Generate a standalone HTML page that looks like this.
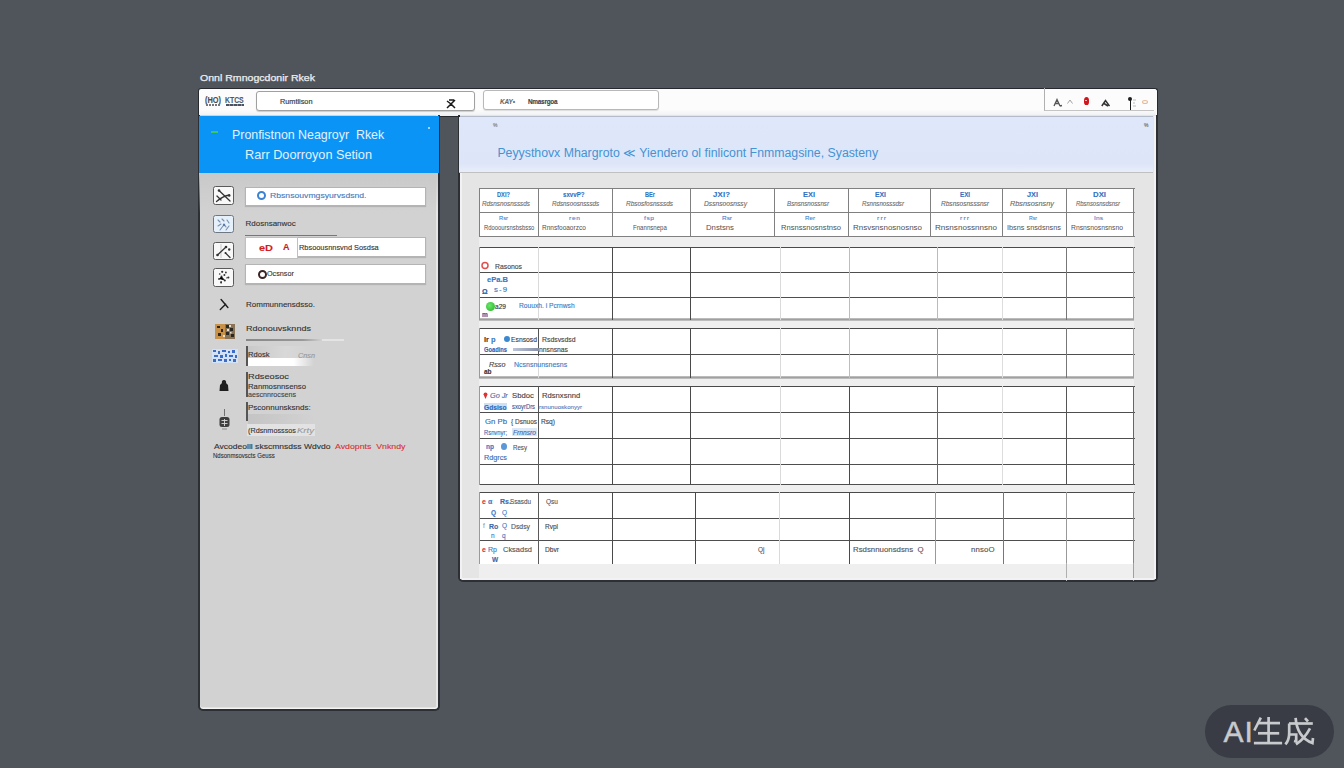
<!DOCTYPE html>
<html><head><meta charset="utf-8">
<style>
*{margin:0;padding:0;box-sizing:border-box}
html,body{width:1344px;height:768px;overflow:hidden;background:#50555c;font-family:"Liberation Sans",sans-serif;position:relative}
.a{position:absolute}
.t{position:absolute;white-space:nowrap;line-height:1}
</style></head><body>

<div class="t" style="left:200px;top:73.86px;font-size:9px;color:#eceef0;transform:scaleX(1.173);transform-origin:0 0;-webkit-text-stroke:0.25px #eceef0;">Onnl Rmnogcdonir Rkek</div>
<div class="a" style="left:198px;top:88px;width:960px;height:28px;background:#fcfcfc;border:1px solid #26292d;border-bottom:none;border-radius:3px 3px 0 0"></div>
<div class="a" style="left:199px;top:110px;width:957px;height:6px;background:linear-gradient(#fbfbfb,#eef0f2)"></div>
<div class="t" style="left:205px;top:95.69px;font-size:8.5px;color:#4a4e54;transform:scaleX(0.869);transform-origin:0 0;-webkit-text-stroke:0.12px #4a4e54;font-weight:bold;">(HO)</div>
<div class="a" style="left:205.5px;top:104.3px;width:15px;height:1.3px;background:repeating-linear-gradient(90deg,#777 0 2px,transparent 2px 3px)"></div>
<div class="t" style="left:225.3px;top:95.69px;font-size:8.5px;color:#4a5a6c;transform:scaleX(0.808);transform-origin:0 0;-webkit-text-stroke:0.12px #4a5a6c;font-weight:bold;">KTCS</div>
<div class="a" style="left:225.5px;top:104.2px;width:18.5px;height:1.6px;background:repeating-linear-gradient(90deg,#4a5260 0 3px,#8a9098 3px 4px)"></div>
<div class="a" style="left:256px;top:91px;width:219px;height:20px;background:#fff;border:1px solid #a0a0a0;border-radius:3px;box-shadow:0 1px 1px rgba(0,0,0,.18)"></div>
<div class="t" style="left:280px;top:97.82px;font-size:8px;color:#404040;transform:scaleX(0.913);transform-origin:0 0;-webkit-text-stroke:0.2px #404040;">Rumtlison</div>
<svg class="a" style="left:445px;top:97.5px" width="13" height="12"><path d="M2 3 L6 6 L2 10 M10 2 L6 6 L10 10 M4 2 h5" stroke="#1a1a1a" stroke-width="1.5" fill="none"/></svg>
<div class="a" style="left:483px;top:90px;width:176px;height:20px;background:#fff;border:1px solid #b8b8b8;border-radius:3px;box-shadow:0 1px 1px rgba(0,0,0,.12)"></div>
<div class="t" style="left:500px;top:98.32px;font-size:8px;color:#666;letter-spacing:-0.120px;transform:scaleX(0.800);transform-origin:0 0;-webkit-text-stroke:0.12px #666;font-style:italic;font-weight:bold;">KAY&bull;</div>
<div class="t" style="left:528px;top:98.32px;font-size:8px;color:#404040;letter-spacing:-0.321px;transform:scaleX(0.800);transform-origin:0 0;-webkit-text-stroke:0.12px #404040;font-weight:bold;">Nmasrgoa</div>
<div class="a" style="left:1044px;top:88px;width:110px;height:23px;border-left:1px solid #b0b0b0;border-bottom:1px solid #c4c4c4"></div>
<svg class="a" style="left:1053px;top:97.5px" width="10" height="9"><path d="M1 8 L4 1.5 L7 8 M2.5 5.5 h3 M7 8 l2 -0.5" stroke="#555" stroke-width="1.3" fill="none"/></svg>
<svg class="a" style="left:1066.5px;top:99px" width="6" height="5"><path d="M0.5 4.5 L3 1 L5.5 4.5" stroke="#999" stroke-width="0.9" fill="none"/></svg>
<div class="a" style="left:1083.5px;top:97px;width:5px;height:7.5px;background:#d4141c;border-radius:50% 50% 45% 45%"></div>
<div class="a" style="left:1085.3px;top:99.5px;width:1.5px;height:1.5px;background:#fff;opacity:.7"></div>
<svg class="a" style="left:1100.5px;top:98.5px" width="9" height="8"><path d="M0.8 7 L4.5 1.5 L8.5 7 M3 4.5 L7 7" stroke="#333" stroke-width="1.5" fill="none"/></svg>
<div class="a" style="left:1129.5px;top:98px;width:1.6px;height:12px;background:#1e1e1e"></div>
<div class="a" style="left:1128.3px;top:97px;width:4px;height:4px;background:#1e1e1e;border-radius:50%"></div>
<svg class="a" style="left:1132px;top:99px" width="5" height="10"><path d="M1 1 h3 M1 4 h2 M1 7 h3" stroke="#aaa" stroke-width="0.8"/></svg>
<div class="a" style="left:1141.5px;top:100px;width:6px;height:4px;border:1px solid #e8b898;border-radius:50%"></div>
<div class="a" style="left:198px;top:115px;width:242px;height:595.5px;background:#d2d2d2;border:2px solid #2c2f34;border-top:none;border-radius:0 0 5px 5px;box-shadow:inset 0 -1.5px 0 #f4f4f4,inset -2px 0 0 #e6e6e6"></div>
<div class="a" style="left:199px;top:116px;width:240px;height:56.5px;background:#0a94f6"></div>
<div class="a" style="left:199px;top:172.5px;width:239px;height:40px;background:linear-gradient(#c9c9c9,rgba(210,210,210,0))"></div>
<div class="a" style="left:211px;top:131px;width:7px;height:2px;background:#3cc85a"></div>
<div class="a" style="left:428px;top:127px;width:2px;height:2px;background:#cfe9ff;border-radius:50%"></div>
<div class="t" style="left:232px;top:128.90px;font-size:12.4px;color:#e4f1ff;">Pronfistnon Neagroyr &nbsp;Rkek</div>
<div class="t" style="left:245px;top:148.80px;font-size:12.4px;color:#e4f1ff;transform:scaleX(1.024);transform-origin:0 0;">Rarr Doorroyon Setion</div>
<div class="a" style="left:213px;top:186.3px;width:21px;height:19.2px;background:#f8f8f8;border:1.5px solid #5a5a5a;border-radius:2.5px"></div>
<svg class="a" style="left:213px;top:186px" width="21" height="20"><g stroke="#333" stroke-width="1.3" fill="none" stroke-linecap="round"><path d="M6 4.5 L17 15"/><path d="M3.5 15.5 Q10 10 16.5 9"/><path d="M4 10 L8 14"/></g><circle cx="6" cy="4.5" r="1.3" fill="#333"/><circle cx="16.2" cy="9.5" r="1.3" fill="#333"/></svg>
<div class="a" style="left:213px;top:215.2px;width:21px;height:18.3px;background:#e6f0fb;border:1.5px solid #6e7884;border-radius:2.5px"></div>
<svg class="a" style="left:213px;top:215px" width="21" height="19"><g stroke="#7890b0" stroke-width="1.1" fill="none" stroke-linecap="round"><path d="M5 5 L7 7 M9 4 L11 6 M14 5 L16 8 M5 11 L8 9 M11 9 L13 12 M7 15 L10 11 M13 15 L16 11"/></g><circle cx="11" cy="10" r="1.2" fill="#5a78a8"/></svg>
<div class="a" style="left:213px;top:241.5px;width:21px;height:18.2px;background:#f8f8f8;border:1.5px solid #5a5a5a;border-radius:2.5px"></div>
<svg class="a" style="left:213px;top:241px" width="21" height="19"><path d="M8 3 V17" stroke="#bbb" stroke-width="0.8"/><g stroke="#333" stroke-width="1.2" fill="none" stroke-linecap="round"><path d="M4.5 14 L13 6"/><path d="M12.5 12 L17 16.5"/></g><circle cx="4.5" cy="14" r="1.3" fill="#333"/><circle cx="13" cy="6" r="1.3" fill="#333"/><circle cx="16.2" cy="8.5" r="1.2" fill="#333"/><circle cx="12.5" cy="12" r="1" fill="#333"/></svg>
<div class="a" style="left:213px;top:267.8px;width:21px;height:18.9px;background:#f8f8f8;border:1.5px solid #5a5a5a;border-radius:2.5px"></div>
<svg class="a" style="left:213px;top:267px" width="21" height="20"><g fill="#333"><circle cx="9.2" cy="4.8" r="1.1"/><circle cx="12.9" cy="5.5" r="0.9"/><circle cx="6.7" cy="7" r="0.8"/><circle cx="11.4" cy="8" r="1"/><circle cx="8.5" cy="9.5" r="1"/><circle cx="6" cy="12" r="0.9"/><circle cx="15.4" cy="10.6" r="1"/><circle cx="11.8" cy="13.5" r="1"/><ellipse cx="8.1" cy="15.3" rx="0.9" ry="1.4"/></g><g stroke="#333" stroke-width="0.8"><path d="M6 12 L8.5 9.5 L11.8 13.5 M13 11 L15.4 10.6"/></g></svg>
<div class="a" style="left:245px;top:187px;width:181px;height:19px;background:#fff;border:1px solid #b4b4b4;box-shadow:0 1px 1px rgba(0,0,0,.14)"></div>
<div class="a" style="left:257px;top:191px;width:9px;height:9px;border:2px solid #3d82d0;border-radius:50%"></div>
<div class="t" style="left:269.5px;top:191.92px;font-size:8px;color:#4a78b8;transform:scaleX(1.080);transform-origin:0 0;-webkit-text-stroke:0.12px #4a78b8;">Rbsnsouvmgsyurvsdsnd.</div>
<div class="t" style="left:245.5px;top:220.32px;font-size:8px;color:#333;-webkit-text-stroke:0.12px #333;">Rdosnsanwoc</div>
<div class="a" style="left:245px;top:235px;width:92px;height:1px;background:#777"></div>
<div class="a" style="left:245px;top:237px;width:181px;height:20px;background:#fff;border:1px solid #b4b4b4;box-shadow:0 1px 1px rgba(0,0,0,.14)"></div>
<div class="a" style="left:245px;top:237px;width:53px;height:22px;background:#fff;border:1px solid #c0c0c0"></div>
<div class="t" style="left:258.5px;top:243.13px;font-size:9.5px;color:#d41e1e;transform:scaleX(1.152);transform-origin:0 0;-webkit-text-stroke:0.12px #d41e1e;font-weight:bold;">eD</div>
<div class="t" style="left:283px;top:243.36px;font-size:9px;color:#c82020;-webkit-text-stroke:0.12px #c82020;font-weight:bold;">A</div>
<div class="t" style="left:299px;top:243.52px;font-size:8px;color:#333;transform:scaleX(0.924);transform-origin:0 0;-webkit-text-stroke:0.12px #333;">Rbsoousnnsvnd Sosdsa</div>
<div class="a" style="left:245px;top:264px;width:181px;height:20px;background:#fff;border:1px solid #b4b4b4;box-shadow:0 1px 1px rgba(0,0,0,.14)"></div>
<div class="a" style="left:258.2px;top:269.5px;width:9px;height:9px;border:2.8px solid #3c2424;border-radius:50%"></div>
<div class="t" style="left:267.4px;top:270.42px;font-size:8px;color:#333;transform:scaleX(0.903);transform-origin:0 0;-webkit-text-stroke:0.12px #333;">Ocsnsor</div>
<svg class="a" style="left:218px;top:297px" width="14" height="14"><g stroke="#1e1e1e" stroke-width="1.4" fill="none" stroke-linecap="round"><path d="M3.1 2.5 L9.9 10.5"/><path d="M2.3 12.4 L7.6 7.3"/></g></svg>
<div class="t" style="left:246px;top:301.12px;font-size:8px;color:#333;-webkit-text-stroke:0.12px #333;">Rommunnensdsso.</div>
<svg class="a" style="left:214.5px;top:323.5px" width="20" height="15"><rect x="0" y="0" width="20" height="15" fill="#8a7458"/><rect x="0" y="0" width="10" height="15" fill="#c8924a"/><g fill="#2a2620"><rect x="2" y="2" width="3" height="2"/><rect x="6" y="5" width="2" height="3"/><rect x="3" y="9" width="3" height="3"/><rect x="11" y="1" width="3" height="3"/><rect x="15" y="4" width="3" height="3"/><rect x="11" y="8" width="3" height="3"/><rect x="16" y="10" width="3" height="3"/></g><g fill="#e8e0d0"><rect x="14" y="1" width="2" height="2"/><rect x="12" y="5" width="2" height="2"/><rect x="15" y="8" width="1.5" height="1.5"/><rect x="8" y="11" width="2" height="2"/></g></svg>
<div class="t" style="left:246px;top:325.32px;font-size:8px;color:#333;transform:scaleX(1.133);transform-origin:0 0;-webkit-text-stroke:0.12px #333;">Rdonouvsknnds</div>
<div class="a" style="left:246px;top:339px;width:76px;height:2px;background:linear-gradient(90deg,#888 0%,#999 75%,rgba(200,200,200,0) 100%)"></div>
<div class="a" style="left:322px;top:339px;width:22px;height:2px;background:#e4e4e4"></div>
<svg class="a" style="left:211.7px;top:348.7px" width="26" height="14"><rect width="26" height="14" fill="#d4e2f6"/><g fill="#3a6cc8"><rect x="1" y="1" width="3" height="2"/><rect x="6" y="2" width="2" height="3"/><rect x="10" y="1" width="4" height="2"/><rect x="16" y="2" width="2" height="2"/><rect x="20" y="1" width="3" height="3"/><rect x="2" y="6" width="4" height="2"/><rect x="8" y="6" width="3" height="3"/><rect x="13" y="5" width="2" height="3"/><rect x="17" y="6" width="4" height="2"/><rect x="23" y="6" width="2" height="3"/><rect x="1" y="10" width="3" height="3"/><rect x="6" y="10" width="4" height="2"/><rect x="12" y="10" width="3" height="3"/><rect x="17" y="10" width="2" height="2"/><rect x="21" y="10" width="3" height="3"/></g></svg>
<div class="a" style="left:246px;top:346px;width:66px;height:13px;background:linear-gradient(90deg,#c8c8c8,#d8d8d8 60%,rgba(210,210,210,0))"></div>
<div class="a" style="left:246px;top:358px;width:68px;height:8px;background:linear-gradient(90deg,#fff 70%,rgba(255,255,255,0))"></div>
<div class="a" style="left:246px;top:346px;width:1.5px;height:20px;background:#555"></div>
<div class="t" style="left:247.5px;top:350.62px;font-size:8px;color:#333;transform:scaleX(0.948);transform-origin:0 0;-webkit-text-stroke:0.12px #333;">Rdosk</div>
<div class="t" style="left:298px;top:351.78px;font-size:7px;color:#999;transform:scaleX(1.040);transform-origin:0 0;-webkit-text-stroke:0.12px #999;font-style:italic;">Cnsn</div>
<svg class="a" style="left:218px;top:379px" width="12" height="13"><path d="M6 1 C4 1 3.5 3 4 4 L2 6 L1.5 12 L10.5 12 L10 6 L8 4 C8.5 3 8 1 6 1Z" fill="#1e1e1e"/></svg>
<div class="a" style="left:246px;top:372px;width:1.5px;height:25px;background:#555"></div>
<div class="t" style="left:248px;top:372.72px;font-size:8px;color:#333;transform:scaleX(1.152);transform-origin:0 0;-webkit-text-stroke:0.12px #333;">Rdseosoc</div>
<div class="t" style="left:248px;top:382.62px;font-size:8px;color:#333;transform:scaleX(0.966);transform-origin:0 0;-webkit-text-stroke:0.12px #333;">Ranmosnnsenso</div>
<div class="t" style="left:248px;top:391.15px;font-size:7.5px;color:#444;transform:scaleX(0.951);transform-origin:0 0;-webkit-text-stroke:0.12px #444;">aescnnrocsens</div>
<div class="a" style="left:246px;top:402px;width:1.5px;height:19px;background:#555"></div>
<div class="t" style="left:248px;top:404.02px;font-size:8px;color:#333;-webkit-text-stroke:0.12px #333;">Psconnunsksnds:</div>
<div class="a" style="left:248px;top:414px;width:66px;height:10px;background:linear-gradient(90deg,#c4c4c4,rgba(205,205,205,0))"></div>
<svg class="a" style="left:218px;top:409px" width="14" height="21"><path d="M6.5 0 V7" stroke="#666" stroke-width="0.9"/><rect x="1.5" y="8" width="10" height="10" rx="2.5" fill="#3e3e3e"/><path d="M3.5 11.5h6M3.5 14.5h6M6.5 10v7" stroke="#d8d8d8" stroke-width="0.9"/><path d="M4 20h5" stroke="#777" stroke-width="0.8"/></svg>
<div class="a" style="left:247px;top:424px;width:68px;height:12px;background:#e2e2e2"></div>
<div class="t" style="left:248px;top:426.92px;font-size:8px;color:#333;transform:scaleX(0.907);transform-origin:0 0;-webkit-text-stroke:0.12px #333;">(Rdsnmosssos</div>
<div class="t" style="left:297px;top:426.92px;font-size:8px;color:#999;transform:scaleX(1.194);transform-origin:0 0;-webkit-text-stroke:0.12px #999;font-style:italic;">Krty</div>
<div class="t" style="left:213.5px;top:442.75px;font-size:7.5px;color:#333;transform:scaleX(1.138);transform-origin:0 0;-webkit-text-stroke:0.12px #333;">Avcodeolll skscmnsdss Wdvdo</div>
<div class="t" style="left:334.6px;top:442.75px;font-size:7.5px;color:#d83434;transform:scaleX(1.167);transform-origin:0 0;-webkit-text-stroke:0.12px #d83434;">Avdopnts &nbsp;Vnkndy</div>
<div class="t" style="left:213px;top:452.45px;font-size:7.5px;color:#333;transform:scaleX(0.804);transform-origin:0 0;-webkit-text-stroke:0.12px #333;">Ndsonmsovscts Geuss</div>
<div class="a" style="left:458px;top:115px;width:700px;height:467px;background:#e5e5e5;border:2px solid #2c2f34;border-top:none;border-radius:0 0 5px 5px;box-shadow:inset 0 -1.5px 0 #f6f6f6"></div>
<div class="a" style="left:459.5px;top:116px;width:2.5px;height:463px;background:#f2f2f2"></div>
<div class="a" style="left:1153.5px;top:116px;width:2.5px;height:463px;background:#f2f2f2"></div>
<div class="a" style="left:459px;top:116px;width:694px;height:57px;background:linear-gradient(#dfe7fa,#dde6f8 85%,#e8eefa);border-top:1px solid #b4bccb;border-bottom:1.5px solid #c0c0c0"></div>
<div class="t" style="left:497.4px;top:146.64px;font-size:12.3px;color:#4493d4;">Peyysthovx Mhargroto &#8810; Yiendero ol finlicont Fnmmagsine, Syasteny</div>
<div class="t" style="left:493px;top:122.70px;font-size:5px;color:#777;-webkit-text-stroke:0.12px #777;">%</div>
<div class="t" style="left:1144px;top:123.20px;font-size:5px;color:#666;-webkit-text-stroke:0.12px #666;">%</div>
<div class="a" style="left:479px;top:236px;width:655px;height:342px;background:#efefef"></div>
<div class="a" style="left:479.5px;top:188px;width:654px;height:48px;background:#fff"></div>
<div class="a" style="left:479px;top:188px;width:656px;height:1px;background:#808080"></div>
<div class="a" style="left:479px;top:212px;width:656px;height:1px;background:#808080"></div>
<div class="a" style="left:479px;top:236px;width:656px;height:1px;background:#808080"></div>
<div class="a" style="left:479px;top:188px;width:1px;height:49px;background:#808080"></div>
<div class="a" style="left:538px;top:188px;width:1px;height:49px;background:#808080"></div>
<div class="a" style="left:612px;top:188px;width:1px;height:49px;background:#808080"></div>
<div class="a" style="left:690px;top:188px;width:1px;height:49px;background:#808080"></div>
<div class="a" style="left:774px;top:188px;width:1px;height:49px;background:#808080"></div>
<div class="a" style="left:848px;top:188px;width:1px;height:49px;background:#808080"></div>
<div class="a" style="left:930px;top:188px;width:1px;height:49px;background:#808080"></div>
<div class="a" style="left:1002px;top:188px;width:1px;height:49px;background:#808080"></div>
<div class="a" style="left:1066px;top:188px;width:1px;height:49px;background:#808080"></div>
<div class="a" style="left:1133px;top:188px;width:1px;height:49px;background:#808080"></div>
<div class="t" style="left:497px;top:191.51px;font-size:6.5px;color:#3272c4;transform:scaleX(0.878);transform-origin:0 0;font-weight:bold;-webkit-text-stroke:0.1px #3272c4;">DXI?</div>
<div class="t" style="left:482px;top:200.51px;font-size:6.5px;color:#6a6a6a;transform:scaleX(0.977);transform-origin:0 0;font-style:italic;-webkit-text-stroke:0.1px #6a6a6a;">Rdsnsnosnsssds</div>
<div class="t" style="left:499px;top:216.47px;font-size:5.5px;color:#4a82cc;transform:scaleX(1.051);transform-origin:0 0;-webkit-text-stroke:0.1px #4a82cc;">Rsr</div>
<div class="t" style="left:483.8px;top:223.58px;font-size:7px;color:#505050;transform:scaleX(0.841);transform-origin:0 0;-webkit-text-stroke:0px #505050;">Rdoooursnsbsbsso</div>
<div class="t" style="left:563px;top:191.51px;font-size:6.5px;color:#3272c4;transform:scaleX(0.948);transform-origin:0 0;font-weight:bold;-webkit-text-stroke:0.1px #3272c4;">sxvvP?</div>
<div class="t" style="left:551.5px;top:200.51px;font-size:6.5px;color:#6a6a6a;transform:scaleX(0.961);transform-origin:0 0;font-style:italic;-webkit-text-stroke:0.1px #6a6a6a;">Rdsnsoosnsssds</div>
<div class="t" style="left:569px;top:216.47px;font-size:5.5px;color:#4a82cc;letter-spacing:0.607px;transform:scaleX(1.200);transform-origin:0 0;-webkit-text-stroke:0.1px #4a82cc;">ren</div>
<div class="t" style="left:541.6px;top:223.58px;font-size:7px;color:#505050;transform:scaleX(0.930);transform-origin:0 0;-webkit-text-stroke:0px #505050;">Rnnsfooaorzco</div>
<div class="t" style="left:645px;top:191.51px;font-size:6.5px;color:#3272c4;transform:scaleX(0.865);transform-origin:0 0;font-weight:bold;-webkit-text-stroke:0.1px #3272c4;">BEr</div>
<div class="t" style="left:626px;top:200.51px;font-size:6.5px;color:#6a6a6a;transform:scaleX(0.993);transform-origin:0 0;font-style:italic;-webkit-text-stroke:0.1px #6a6a6a;">Rbsosfosnsssds</div>
<div class="t" style="left:644px;top:216.47px;font-size:5.5px;color:#4a82cc;letter-spacing:0.495px;transform:scaleX(1.200);transform-origin:0 0;-webkit-text-stroke:0.1px #4a82cc;">fsp</div>
<div class="t" style="left:632.5px;top:223.58px;font-size:7px;color:#505050;transform:scaleX(0.871);transform-origin:0 0;-webkit-text-stroke:0px #505050;">Fnannsnepa</div>
<div class="t" style="left:713px;top:191.51px;font-size:6.5px;color:#3272c4;letter-spacing:0.144px;transform:scaleX(1.200);transform-origin:0 0;font-weight:bold;-webkit-text-stroke:0.1px #3272c4;">JXI?</div>
<div class="t" style="left:704px;top:200.51px;font-size:6.5px;color:#6a6a6a;transform:scaleX(1.026);transform-origin:0 0;font-style:italic;-webkit-text-stroke:0.1px #6a6a6a;">Dssnsoosnssy</div>
<div class="t" style="left:722px;top:216.47px;font-size:5.5px;color:#4a82cc;transform:scaleX(1.168);transform-origin:0 0;-webkit-text-stroke:0.1px #4a82cc;">Rsr</div>
<div class="t" style="left:706px;top:223.58px;font-size:7px;color:#505050;transform:scaleX(1.107);transform-origin:0 0;-webkit-text-stroke:0px #505050;">Dnstsns</div>
<div class="t" style="left:803px;top:191.51px;font-size:6.5px;color:#3272c4;transform:scaleX(1.145);transform-origin:0 0;font-weight:bold;-webkit-text-stroke:0.1px #3272c4;">EXI</div>
<div class="t" style="left:787px;top:200.51px;font-size:6.5px;color:#6a6a6a;transform:scaleX(0.953);transform-origin:0 0;font-style:italic;-webkit-text-stroke:0.1px #6a6a6a;">Bsnsnsnossnsr</div>
<div class="t" style="left:805px;top:216.47px;font-size:5.5px;color:#4a82cc;transform:scaleX(1.127);transform-origin:0 0;-webkit-text-stroke:0.1px #4a82cc;">Rer</div>
<div class="t" style="left:781px;top:223.58px;font-size:7px;color:#505050;transform:scaleX(1.086);transform-origin:0 0;-webkit-text-stroke:0px #505050;">Rnsnssnosnstnso</div>
<div class="t" style="left:875px;top:191.51px;font-size:6.5px;color:#3272c4;transform:scaleX(1.049);transform-origin:0 0;font-weight:bold;-webkit-text-stroke:0.1px #3272c4;">EXI</div>
<div class="t" style="left:862px;top:200.51px;font-size:6.5px;color:#6a6a6a;transform:scaleX(0.945);transform-origin:0 0;font-style:italic;-webkit-text-stroke:0.1px #6a6a6a;">Rsnnsnosssdsr</div>
<div class="t" style="left:877px;top:216.47px;font-size:5.5px;color:#4a82cc;letter-spacing:1.000px;transform:scaleX(1.200);transform-origin:0 0;-webkit-text-stroke:0.1px #4a82cc;">rrr</div>
<div class="t" style="left:853px;top:223.58px;font-size:7px;color:#505050;transform:scaleX(1.137);transform-origin:0 0;-webkit-text-stroke:0px #505050;">Rnsvsnsnosnosnso</div>
<div class="t" style="left:960px;top:191.51px;font-size:6.5px;color:#3272c4;transform:scaleX(0.954);transform-origin:0 0;font-weight:bold;-webkit-text-stroke:0.1px #3272c4;">EXI</div>
<div class="t" style="left:941px;top:200.51px;font-size:6.5px;color:#6a6a6a;transform:scaleX(1.007);transform-origin:0 0;font-style:italic;-webkit-text-stroke:0.1px #6a6a6a;">Rbsnsosnsssnsr</div>
<div class="t" style="left:960px;top:216.47px;font-size:5.5px;color:#4a82cc;letter-spacing:1.000px;transform:scaleX(1.200);transform-origin:0 0;-webkit-text-stroke:0.1px #4a82cc;">rrr</div>
<div class="t" style="left:935px;top:223.58px;font-size:7px;color:#505050;transform:scaleX(1.154);transform-origin:0 0;-webkit-text-stroke:0px #505050;">Rnsnsnossnnsno</div>
<div class="t" style="left:1027px;top:191.51px;font-size:6.5px;color:#3272c4;transform:scaleX(1.126);transform-origin:0 0;font-weight:bold;-webkit-text-stroke:0.1px #3272c4;">JXI</div>
<div class="t" style="left:1010px;top:200.51px;font-size:6.5px;color:#6a6a6a;transform:scaleX(1.127);transform-origin:0 0;font-style:italic;-webkit-text-stroke:0.1px #6a6a6a;">Rbsnsosnsny</div>
<div class="t" style="left:1029px;top:216.47px;font-size:5.5px;color:#4a82cc;transform:scaleX(0.934);transform-origin:0 0;-webkit-text-stroke:0.1px #4a82cc;">Rsr</div>
<div class="t" style="left:1007px;top:223.58px;font-size:7px;color:#505050;transform:scaleX(1.043);transform-origin:0 0;-webkit-text-stroke:0px #505050;">Ibsns snsdsnsns</div>
<div class="t" style="left:1093px;top:191.51px;font-size:6.5px;color:#3272c4;transform:scaleX(1.199);transform-origin:0 0;font-weight:bold;-webkit-text-stroke:0.1px #3272c4;">DXI</div>
<div class="t" style="left:1076px;top:200.51px;font-size:6.5px;color:#6a6a6a;transform:scaleX(0.915);transform-origin:0 0;font-style:italic;-webkit-text-stroke:0.1px #6a6a6a;">Rbsnsosnsdsnsr</div>
<div class="t" style="left:1094px;top:216.47px;font-size:5.5px;color:#4a82cc;letter-spacing:0.078px;transform:scaleX(1.200);transform-origin:0 0;-webkit-text-stroke:0.1px #4a82cc;">Ins</div>
<div class="t" style="left:1071px;top:223.58px;font-size:7px;color:#505050;transform:scaleX(0.968);transform-origin:0 0;-webkit-text-stroke:0px #505050;">Rnsnsnosnsnsno</div>
<div class="a" style="left:479.5px;top:247px;width:654px;height:72.5px;background:#fff"></div>
<div class="a" style="left:479px;top:247px;width:656px;height:1px;background:#4a4a4a"></div>
<div class="a" style="left:479px;top:272px;width:656px;height:1px;background:#4e4e4e"></div>
<div class="a" style="left:479px;top:297px;width:656px;height:1px;background:#4e4e4e"></div>
<div class="a" style="left:479px;top:318.0px;width:655px;height:3px;background:linear-gradient(#c8c8c8,#a0a0a0 50%,#cacaca)"></div>
<div class="a" style="left:479px;top:247px;width:1px;height:73px;background:#9a9a9a"></div>
<div class="a" style="left:538px;top:247px;width:1px;height:73px;background:#dadada"></div>
<div class="a" style="left:612px;top:247px;width:1px;height:73px;background:#4a4a4a"></div>
<div class="a" style="left:690px;top:247px;width:1px;height:73px;background:#4a4a4a"></div>
<div class="a" style="left:780px;top:247px;width:1px;height:73px;background:#dadada"></div>
<div class="a" style="left:849px;top:247px;width:1px;height:73px;background:#bdbdbd"></div>
<div class="a" style="left:937px;top:247px;width:1px;height:73px;background:#bbbbbb"></div>
<div class="a" style="left:1002px;top:247px;width:1px;height:73px;background:#dddddd"></div>
<div class="a" style="left:1066px;top:247px;width:1px;height:73px;background:#777777"></div>
<div class="a" style="left:1133px;top:247px;width:1px;height:73px;background:#a0a0a0"></div>
<div class="a" style="left:479.5px;top:328.7px;width:654px;height:48.3px;background:#fff"></div>
<div class="a" style="left:479px;top:328px;width:656px;height:1px;background:#4a4a4a"></div>
<div class="a" style="left:479px;top:354px;width:656px;height:1px;background:#4e4e4e"></div>
<div class="a" style="left:479px;top:375.5px;width:655px;height:3px;background:linear-gradient(#c8c8c8,#a0a0a0 50%,#cacaca)"></div>
<div class="a" style="left:479px;top:328px;width:1px;height:50px;background:#9a9a9a"></div>
<div class="a" style="left:538px;top:328px;width:1px;height:50px;background:#dadada"></div>
<div class="a" style="left:612px;top:328px;width:1px;height:50px;background:#4a4a4a"></div>
<div class="a" style="left:690px;top:328px;width:1px;height:50px;background:#4a4a4a"></div>
<div class="a" style="left:780px;top:328px;width:1px;height:50px;background:#dadada"></div>
<div class="a" style="left:849px;top:328px;width:1px;height:50px;background:#bdbdbd"></div>
<div class="a" style="left:937px;top:328px;width:1px;height:50px;background:#999999"></div>
<div class="a" style="left:1002px;top:328px;width:1px;height:50px;background:#dddddd"></div>
<div class="a" style="left:1066px;top:328px;width:1px;height:50px;background:#777777"></div>
<div class="a" style="left:1133px;top:328px;width:1px;height:50px;background:#a0a0a0"></div>
<div class="a" style="left:479.5px;top:386.5px;width:654px;height:97.7px;background:#fff"></div>
<div class="a" style="left:479px;top:386px;width:656px;height:1px;background:#4a4a4a"></div>
<div class="a" style="left:479px;top:412px;width:656px;height:1px;background:#4e4e4e"></div>
<div class="a" style="left:479px;top:438px;width:656px;height:1px;background:#4e4e4e"></div>
<div class="a" style="left:479px;top:464px;width:656px;height:1px;background:#4e4e4e"></div>
<div class="a" style="left:479px;top:484px;width:656px;height:1px;background:#4e4e4e"></div>
<div class="a" style="left:479px;top:386px;width:1px;height:99px;background:#9a9a9a"></div>
<div class="a" style="left:538px;top:386px;width:1px;height:99px;background:#5a5a5a"></div>
<div class="a" style="left:612px;top:386px;width:1px;height:99px;background:#4a4a4a"></div>
<div class="a" style="left:690px;top:386px;width:1px;height:99px;background:#4a4a4a"></div>
<div class="a" style="left:780px;top:386px;width:1px;height:99px;background:#dadada"></div>
<div class="a" style="left:849px;top:386px;width:1px;height:99px;background:#4a4a4a"></div>
<div class="a" style="left:937px;top:386px;width:1px;height:99px;background:#666666"></div>
<div class="a" style="left:1002px;top:386px;width:1px;height:99px;background:#dddddd"></div>
<div class="a" style="left:1066px;top:386px;width:1px;height:99px;background:#555555"></div>
<div class="a" style="left:1133px;top:386px;width:1px;height:99px;background:#666666"></div>
<div class="a" style="left:479.5px;top:492.8px;width:654px;height:70.9px;background:#fff"></div>
<div class="a" style="left:479px;top:492px;width:656px;height:1px;background:#4a4a4a"></div>
<div class="a" style="left:479px;top:518px;width:656px;height:1px;background:#4e4e4e"></div>
<div class="a" style="left:479px;top:540px;width:656px;height:1px;background:#4e4e4e"></div>
<div class="a" style="left:479px;top:492px;width:1px;height:72px;background:#9a9a9a"></div>
<div class="a" style="left:538px;top:492px;width:1px;height:72px;background:#5a5a5a"></div>
<div class="a" style="left:612px;top:492px;width:1px;height:72px;background:#4a4a4a"></div>
<div class="a" style="left:695px;top:492px;width:1px;height:72px;background:#4a4a4a"></div>
<div class="a" style="left:779px;top:492px;width:1px;height:72px;background:#dadada"></div>
<div class="a" style="left:849px;top:492px;width:1px;height:72px;background:#4a4a4a"></div>
<div class="a" style="left:935px;top:492px;width:1px;height:72px;background:#999999"></div>
<div class="a" style="left:1003px;top:492px;width:1px;height:72px;background:#777777"></div>
<div class="a" style="left:1066px;top:492px;width:1px;height:72px;background:#999999"></div>
<div class="a" style="left:1133px;top:492px;width:1px;height:72px;background:#888888"></div>
<div class="a" style="left:1066px;top:563px;width:1px;height:18px;background:#b0b0b0"></div>
<div class="a" style="left:1133px;top:563px;width:1px;height:18px;background:#a0a0a0"></div>
<div class="a" style="left:462px;top:577.5px;width:691px;height:2.5px;background:#f2f2f2"></div>
<div class="a" style="left:538px;top:328px;width:1px;height:28px;background:#555"></div>
<div class="a" style="left:538px;top:386px;width:1px;height:53px;background:#555"></div>
<svg class="a" style="left:481px;top:261px" width="8" height="9"><circle cx="4" cy="4.5" r="3" fill="none" stroke="#e05050" stroke-width="1.5"/></svg>
<div class="t" style="left:495px;top:262.58px;font-size:7px;color:#444;transform:scaleX(0.977);transform-origin:0 0;-webkit-text-stroke:0.12px #444;">Rasonos</div>
<div class="t" style="left:487px;top:276.18px;font-size:7px;color:#3a78c4;transform:scaleX(1.079);transform-origin:0 0;-webkit-text-stroke:0.12px #3a78c4;font-weight:bold;">ePa.B</div>
<div class="t" style="left:482px;top:287.78px;font-size:7px;color:#2456a0;-webkit-text-stroke:0.12px #2456a0;font-weight:bold;">&Omega;</div>
<div class="t" style="left:494px;top:287.31px;font-size:6.5px;color:#3a78c4;letter-spacing:0.901px;transform:scaleX(1.200);transform-origin:0 0;-webkit-text-stroke:0.12px #3a78c4;">s-9</div>
<div class="a" style="left:486px;top:301.5px;width:9px;height:9px;background:radial-gradient(circle at 40% 40%,#6ae86a,#22b022);border-radius:50%"></div>
<div class="t" style="left:495px;top:302.78px;font-size:7px;color:#333;transform:scaleX(0.941);transform-origin:0 0;-webkit-text-stroke:0.12px #333;">a29</div>
<div class="t" style="left:482px;top:311.51px;font-size:6.5px;color:#2456a0;-webkit-text-stroke:0.12px #2456a0;font-weight:bold;">m</div>
<div class="t" style="left:519px;top:302.49px;font-size:7.2px;color:#3a78c4;transform:scaleX(0.928);transform-origin:0 0;-webkit-text-stroke:0.12px #3a78c4;">Rouuxh. i Pcrnwsh</div>
<div class="t" style="left:484px;top:335.75px;font-size:7.5px;color:#6a3020;-webkit-text-stroke:0.12px #6a3020;font-weight:bold;">Ir</div>
<div class="t" style="left:491px;top:336.05px;font-size:7.5px;color:#3a78c4;-webkit-text-stroke:0.12px #3a78c4;font-weight:bold;">p</div>
<div class="a" style="left:503.5px;top:335.5px;width:6.5px;height:6.5px;background:#3a88d0;border-radius:50%"></div>
<div class="t" style="left:511px;top:335.89px;font-size:7.2px;color:#3a3a3a;transform:scaleX(0.943);transform-origin:0 0;-webkit-text-stroke:0.12px #3a3a3a;">Esnsosd</div>
<div class="t" style="left:542px;top:335.89px;font-size:7.2px;color:#444;transform:scaleX(0.956);transform-origin:0 0;-webkit-text-stroke:0.12px #444;">Rsdsvsdsd</div>
<div class="t" style="left:484px;top:345.89px;font-size:7.2px;color:#2a60b0;letter-spacing:-0.003px;transform:scaleX(0.800);transform-origin:0 0;-webkit-text-stroke:0.12px #2a60b0;font-weight:bold;">Goadins</div>
<div class="a" style="left:513px;top:348px;width:26px;height:2.5px;background:linear-gradient(90deg,#bcc4d8,#8890a8)"></div>
<div class="t" style="left:539px;top:346.51px;font-size:6.5px;color:#444;transform:scaleX(1.042);transform-origin:0 0;-webkit-text-stroke:0.12px #444;">nnsnsnas</div>
<div class="t" style="left:489px;top:360.78px;font-size:7px;color:#444;transform:scaleX(1.028);transform-origin:0 0;-webkit-text-stroke:0.12px #444;font-style:italic;">Rsso</div>
<div class="t" style="left:484px;top:368.51px;font-size:6.5px;color:#333;-webkit-text-stroke:0.12px #333;font-weight:bold;">ab</div>
<div class="t" style="left:513.75px;top:360.69px;font-size:7.2px;color:#3a7ac4;transform:scaleX(0.973);transform-origin:0 0;-webkit-text-stroke:0.12px #3a7ac4;">Ncsnsnunsnesns</div>
<svg class="a" style="left:483px;top:391.5px" width="5" height="8"><path d="M2.5 7 L0.5 2.5 A2 2 0 1 1 4.5 2.5Z" fill="#e03030"/></svg>
<div class="t" style="left:490px;top:392.38px;font-size:7px;color:#4a6ea8;transform:scaleX(1.039);transform-origin:0 0;-webkit-text-stroke:0.12px #4a6ea8;font-style:italic;">Go Jr</div>
<div class="t" style="left:512px;top:392.38px;font-size:7px;color:#444;transform:scaleX(1.098);transform-origin:0 0;-webkit-text-stroke:0.12px #444;">Sbdoc</div>
<div class="t" style="left:542px;top:392.29px;font-size:7.2px;color:#444;transform:scaleX(1.065);transform-origin:0 0;-webkit-text-stroke:0.12px #444;">Rdsnxsnnd</div>
<div class="a" style="left:484px;top:403px;width:23px;height:7px;background:#cfe0f4"></div>
<div class="t" style="left:484px;top:403.58px;font-size:7px;color:#2a68c0;transform:scaleX(0.948);transform-origin:0 0;-webkit-text-stroke:0.12px #2a68c0;font-weight:bold;">Gdsiso</div>
<div class="t" style="left:512px;top:403.81px;font-size:6.5px;color:#3a5a98;transform:scaleX(0.897);transform-origin:0 0;-webkit-text-stroke:0.12px #3a5a98;">sxoyrDrs</div>
<div class="t" style="left:538.5px;top:404.44px;font-size:6px;color:#5a80c0;transform:scaleX(1.017);transform-origin:0 0;-webkit-text-stroke:0.12px #5a80c0;">rsnunuoskonyyr</div>
<div class="t" style="left:485px;top:417.78px;font-size:7px;color:#3a68a8;transform:scaleX(1.108);transform-origin:0 0;-webkit-text-stroke:0.12px #3a68a8;">Gn Pb</div>
<div class="t" style="left:511px;top:417.78px;font-size:7px;color:#444;transform:scaleX(0.928);transform-origin:0 0;-webkit-text-stroke:0.12px #444;">{ Dsnuos</div>
<div class="t" style="left:541px;top:417.78px;font-size:7px;color:#444;transform:scaleX(0.947);transform-origin:0 0;-webkit-text-stroke:0.12px #444;">Rsq)</div>
<div class="a" style="left:512px;top:427.5px;width:25px;height:8px;background:#dde8f6"></div>
<div class="t" style="left:484px;top:428.78px;font-size:7px;color:#3a6ab0;transform:scaleX(0.833);transform-origin:0 0;-webkit-text-stroke:0.12px #3a6ab0;">Rsnvnyr;</div>
<div class="t" style="left:513px;top:428.78px;font-size:7px;color:#3a6ab0;transform:scaleX(0.953);transform-origin:0 0;-webkit-text-stroke:0.12px #3a6ab0;font-style:italic;">Frnnsro</div>
<div class="t" style="left:486px;top:444.01px;font-size:6.5px;color:#3a78c4;-webkit-text-stroke:0.12px #3a78c4;font-weight:bold;">np</div>
<div class="a" style="left:501px;top:443px;width:6px;height:7px;background:#5a98d8;border-radius:50%"></div>
<div class="t" style="left:513px;top:443.78px;font-size:7px;color:#555;transform:scaleX(0.878);transform-origin:0 0;-webkit-text-stroke:0.12px #555;">Resy</div>
<div class="t" style="left:484px;top:453.78px;font-size:7px;color:#3a6ab0;transform:scaleX(1.037);transform-origin:0 0;-webkit-text-stroke:0.12px #3a6ab0;">Rdgrcs</div>
<div class="t" style="left:482px;top:498.38px;font-size:7px;color:#e03030;-webkit-text-stroke:0.12px #e03030;font-weight:bold;">e</div>
<div class="t" style="left:488px;top:498.38px;font-size:7px;color:#3a78c4;-webkit-text-stroke:0.12px #3a78c4;font-weight:bold;">&alpha;</div>
<div class="t" style="left:500px;top:498.08px;font-size:7px;color:#3a6ab0;-webkit-text-stroke:0.12px #3a6ab0;font-weight:bold;">Rs.</div>
<div class="t" style="left:510px;top:498.38px;font-size:7px;color:#555;transform:scaleX(0.899);transform-origin:0 0;-webkit-text-stroke:0.12px #555;">Ssasdu</div>
<div class="t" style="left:491px;top:509.61px;font-size:6.5px;color:#3a78c4;-webkit-text-stroke:0.12px #3a78c4;font-weight:bold;">Q</div>
<div class="t" style="left:502px;top:509.61px;font-size:6.5px;color:#3a78c4;-webkit-text-stroke:0.12px #3a78c4;">Q</div>
<div class="t" style="left:546px;top:498.38px;font-size:7px;color:#555;transform:scaleX(0.934);transform-origin:0 0;-webkit-text-stroke:0.12px #555;">Qsu</div>
<div class="t" style="left:483px;top:523.21px;font-size:6.5px;color:#999;-webkit-text-stroke:0.12px #999;">f</div>
<div class="t" style="left:489px;top:522.98px;font-size:7px;color:#3a68a8;-webkit-text-stroke:0.12px #3a68a8;font-weight:bold;">Ro</div>
<div class="t" style="left:502px;top:523.21px;font-size:6.5px;color:#3a78c4;-webkit-text-stroke:0.12px #3a78c4;">Q</div>
<div class="t" style="left:511px;top:522.98px;font-size:7px;color:#555;transform:scaleX(0.977);transform-origin:0 0;-webkit-text-stroke:0.12px #555;">Dsdsy</div>
<div class="t" style="left:491px;top:533.41px;font-size:6.5px;color:#3a78c4;-webkit-text-stroke:0.12px #3a78c4;">n</div>
<div class="t" style="left:502px;top:533.41px;font-size:6.5px;color:#3a78c4;-webkit-text-stroke:0.12px #3a78c4;">q</div>
<div class="t" style="left:545px;top:522.98px;font-size:7px;color:#444;transform:scaleX(0.928);transform-origin:0 0;-webkit-text-stroke:0.12px #444;">Rvpl</div>
<div class="t" style="left:482px;top:546.28px;font-size:7px;color:#e03030;-webkit-text-stroke:0.12px #e03030;font-weight:bold;">e</div>
<div class="t" style="left:488px;top:546.28px;font-size:7px;color:#3a78c4;-webkit-text-stroke:0.12px #3a78c4;">Rp</div>
<div class="t" style="left:503px;top:546.28px;font-size:7px;color:#555;transform:scaleX(1.065);transform-origin:0 0;-webkit-text-stroke:0.12px #555;">Cksadsd</div>
<div class="t" style="left:492px;top:556.61px;font-size:6.5px;color:#3a68a8;-webkit-text-stroke:0.12px #3a68a8;font-weight:bold;">W</div>
<div class="t" style="left:545px;top:546.28px;font-size:7px;color:#444;transform:scaleX(0.947);transform-origin:0 0;-webkit-text-stroke:0.12px #444;">Dbvr</div>
<div class="t" style="left:758px;top:547.01px;font-size:6.5px;color:#555;-webkit-text-stroke:0.12px #555;">Qj</div>
<div class="t" style="left:853px;top:547.01px;font-size:6.5px;color:#555;letter-spacing:0.018px;transform:scaleX(1.200);transform-origin:0 0;-webkit-text-stroke:0.12px #555;">Rsdsnnuonsdsns &nbsp;Q</div>
<div class="t" style="left:970.5px;top:547.01px;font-size:6.5px;color:#555;letter-spacing:0.107px;transform:scaleX(1.200);transform-origin:0 0;-webkit-text-stroke:0.12px #555;">nnsoO</div>
<div class="a" style="left:438.5px;top:115.5px;width:21px;height:1.6px;background:#26292d"></div>
<div class="a" style="left:1205px;top:705px;width:129px;height:53px;background:#393c44;border-radius:27px"></div>
<div class="t" style="left:1223.5px;top:716.5px;font-size:30px;color:#c8cacd;letter-spacing:1px;-webkit-text-stroke:0.5px #c8cacd">AI</div>
<svg class="a" style="left:1250px;top:714px" width="70" height="34"><g stroke="#c8cacd" stroke-width="2.7" fill="none" stroke-linecap="butt"><path d="M10.8 3.6 L4.3 16.5"/><path d="M8.5 9.1 H30"/><path d="M18.6 3 V29"/><path d="M8 19.3 H29.2"/><path d="M3.9 29.1 H32.1"/><path d="M39 9.5 H62.8"/><path d="M39.2 9.5 V19 C39.2 24 38 27.5 35.4 30.4"/><path d="M39.2 20.5 H46.2 V27.5 L44 27"/><path d="M45.6 3.8 C46.5 16 52 25 62.4 29 L63 24"/><path d="M60 14.4 C57 20 52 26.5 46 30.4"/><path d="M55 4.2 L58 7.5"/></g></svg>
</body></html>
